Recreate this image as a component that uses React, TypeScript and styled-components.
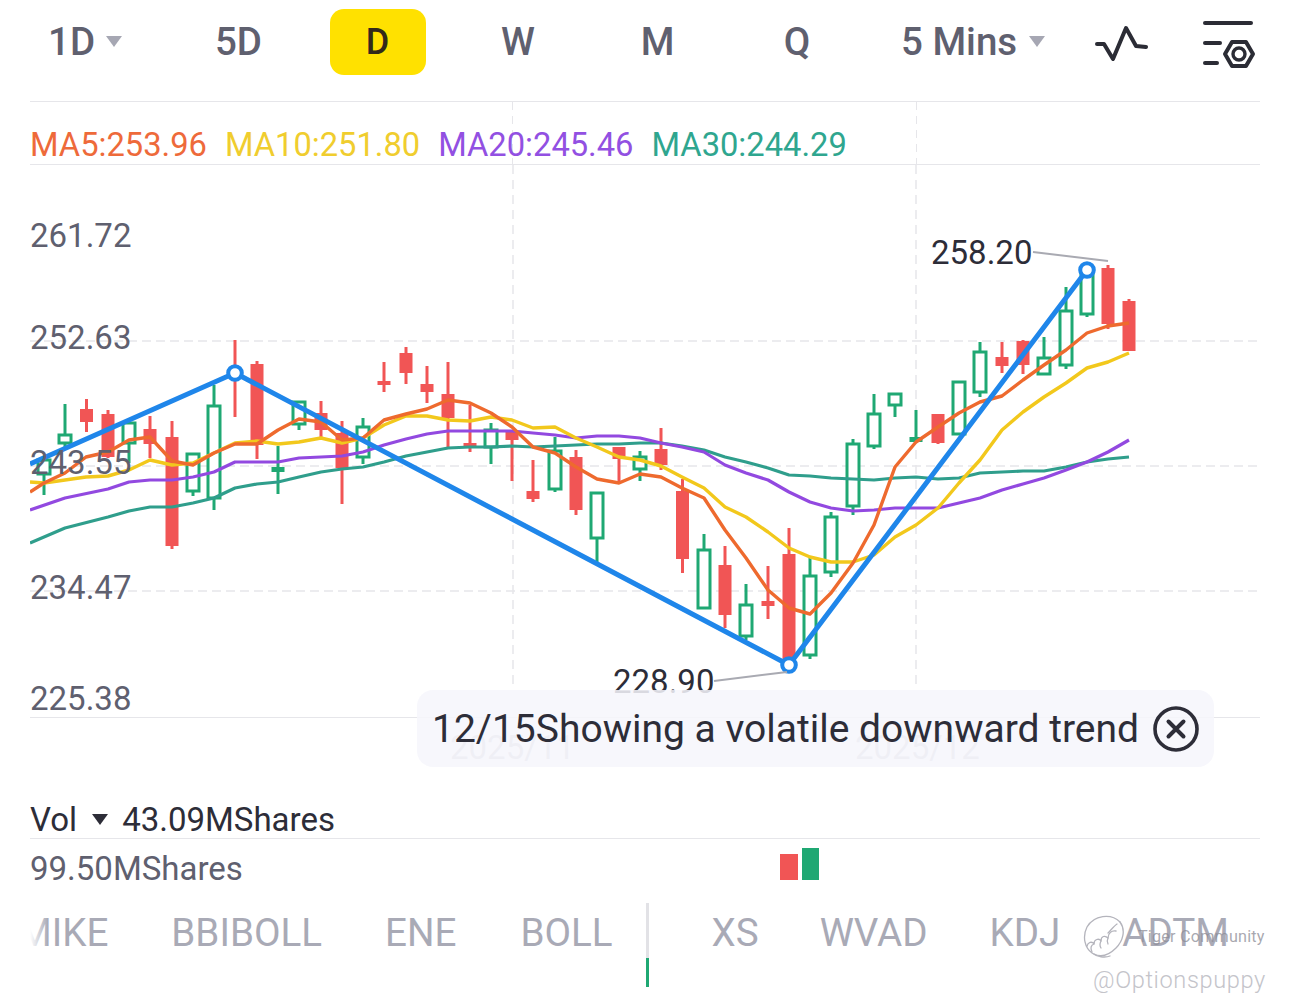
import React from "react";
import styled, { createGlobalStyle } from "styled-components";

const Global = createGlobalStyle`
  html, body { margin: 0; padding: 0; background: #fff; }
  body { font-family: Roboto, "Liberation Sans", sans-serif; }
  #root { width: 1290px; height: 1008px; overflow: hidden; }
`;

const Page = styled.div`
  position: relative;
  width: 1290px;
  height: 1008px;
  overflow: hidden;
  background: #fff;
`;

const Toolbar = styled.div`
  display: flex;
  align-items: center;
  height: 84px;
  padding: 0 0 0 30px;
`;

const Tab = styled.div<{ $w: number; $pad?: number }>`
  display: flex;
  align-items: center;
  flex: none;
  justify-content: ${(p) => (p.$pad !== undefined ? "flex-start" : "center")};
  width: ${(p) => p.$w}px;
  padding-left: ${(p) => p.$pad ?? 0}px;
  padding-bottom: 2px;
  box-sizing: border-box;
  font-size: 38.5px;
  font-weight: 500;
  white-space: nowrap;
  color: #5f606f;
`;

const Pill = styled.div`
  width: 96px;
  height: 66px;
  margin: 0 21.5px;
  border-radius: 14px;
  background: #ffe100;
  display: flex;
  align-items: center;
  justify-content: center;
  font-size: 36px;
  font-weight: 500;
  color: #33291a;
`;

const Caret = styled.span<{ $color?: string; $w?: number; $h?: number; $ml?: number }>`
  display: inline-block;
  margin-left: ${(p) => p.$ml ?? 11}px;
  width: 0;
  height: 0;
  border-left: ${(p) => (p.$w ?? 16) / 2}px solid transparent;
  border-right: ${(p) => (p.$w ?? 16) / 2}px solid transparent;
  border-top: ${(p) => p.$h ?? 11}px solid ${(p) => p.$color ?? "#a6a7b3"};
`;

const IconWrap = styled.svg`
  display: block;
  flex: none;
`;

const Rule = styled.div`
  height: 17px;
  margin: 0 30px;
  border-bottom: 1px solid #e6e6ea;
`;

const Chart = styled.div`
  position: relative;
  margin: 0 30px;
`;

const MaRow = styled.div`
  display: flex;
  align-items: center;
  gap: 18px;
  height: 62px;
  border-bottom: 1px solid #e6e6ea;
  font-size: 32.7px;
  line-height: 1;
  background-image: repeating-linear-gradient(to bottom, #e6e6ea 0 8px, transparent 8px 14px),
    repeating-linear-gradient(to bottom, #e6e6ea 0 8px, transparent 8px 14px);
  background-size: 1px 100%, 1px 100%;
  background-position: 482px 0, 886px 0;
  background-repeat: no-repeat;
`;

const Ma = styled.span<{ $c: string }>`
  color: ${(p) => p.$c};
  position: relative;
  top: 12px;
`;

const Plot = styled.div`
  position: relative;
  height: 552px;
  border-bottom: 1px solid #e6e6ea;
`;

const PlotSvg = styled.svg`
  display: block;
`;

const Price = styled.span<{ $y: number }>`
  position: absolute;
  left: 0;
  top: ${(p) => p.$y}px;
  font-size: 33px;
  line-height: 38px;
  color: #5f606f;
`;

const Peak = styled.span<{ $x: number; $y: number }>`
  position: absolute;
  left: ${(p) => p.$x}px;
  top: ${(p) => p.$y}px;
  font-size: 33px;
  line-height: 38px;
  color: #2d2d38;
`;

const Dates = styled.div`
  position: relative;
  height: 72px;
`;

const DateLabel = styled.span<{ $x: number }>`
  position: absolute;
  left: ${(p) => p.$x}px;
  top: 11px;
  font-size: 33px;
  line-height: 38px;
  color: #c6c6cf;
`;

const Banner = styled.div`
  position: absolute;
  left: 387px;
  top: 588px;
  width: 797px;
  height: 77px;
  box-sizing: border-box;
  padding: 0 15px 0 15px;
  border-radius: 16px;
  background: rgba(246, 246, 251, 0.86);
  display: flex;
  align-items: center;
  justify-content: space-between;
  font-size: 39px;
  white-space: nowrap;
  color: #2d2d38;
`;

const VolRow = styled.div`
  display: flex;
  align-items: center;
  height: 49px;
  padding-top: 11px;
  box-sizing: border-box;
  border-bottom: 1px solid #e6e6ea;
  font-size: 33px;
  color: #2d2d38;
`;

const VolValue = styled.span`
  margin-left: 14px;
`;

const SubRow = styled.div`
  display: flex;
  align-items: center;
  height: 59px;
  font-size: 33px;
  color: #5f606f;
`;

const SubValue = styled.span`
  width: 750px;
  flex: none;
`;

const Bar = styled.div<{ $c: string; $h: number; $w: number; $gap?: number }>`
  width: ${(p) => p.$w}px;
  height: ${(p) => p.$h}px;
  background: ${(p) => p.$c};
  margin-left: ${(p) => p.$gap ?? 0}px;
`;

const Bars = styled.div`
  display: flex;
  align-items: flex-end;
  height: 32px;
  margin-bottom: 10px;
`;

const Indicators = styled.div`
  position: relative;
  display: flex;
  align-items: flex-start;
  margin: 5px 0 0 30px;
  height: 104px;
  overflow: hidden;
  font-size: 38.6px;
  color: #a9aab6;
  &::before {
    content: "";
    position: absolute;
    left: 0;
    top: 0;
    width: 18px;
    height: 60px;
    background: linear-gradient(to right, #fff, rgba(255, 255, 255, 0));
    z-index: 1;
  }
`;

const Indicator = styled.span<{ $ml: number }>`
  flex: none;
  margin-left: ${(p) => p.$ml}px;
  margin-top: 7px;
  line-height: 46px;
`;

const Divider = styled.div`
  flex: none;
  width: 3px;
  height: 84px;
  margin-left: 33px;
  background: linear-gradient(to bottom, #e2e2e6 0 55px, #1fa873 55px 84px);
`;

const Mark = styled.div`
  position: absolute;
  left: 1083px;
  top: 914px;
  display: flex;
  align-items: flex-start;
`;

const MarkName = styled.span`
  position: absolute;
  left: 55px;
  top: 13px;
  white-space: nowrap;
  font-size: 16.2px;
  line-height: 20px;
  letter-spacing: 0.2px;
  color: rgba(140, 140, 150, 0.75);
`;

const MarkUser = styled.span`
  position: absolute;
  left: 10px;
  top: 51px;
  white-space: nowrap;
  font-size: 23.6px;
  font-weight: 300;
  line-height: 30px;
  letter-spacing: 0.6px;
  color: #c4c4ca;
`;

type C = [number, number, number, number, number, "r" | "g" | "gs"];
const RED = "#f15555";
const GREEN = "#1fa873";
const candles: C[] = [
  [44, 460, 474, 460, 495, "g"],
  [65, 435, 443, 404, 447, "g"],
  [86.5, 409, 422, 399, 432, "r"],
  [108, 414, 457, 410, 458, "r"],
  [129, 423, 443, 423, 463, "g"],
  [150, 429, 444, 416, 458, "r"],
  [172, 437, 546, 421, 549, "r"],
  [193, 454, 491, 453, 496, "g"],
  [214, 406, 498, 385, 510, "g"],
  [235, 372, 374, 340, 417, "r"],
  [257, 364, 445, 361, 459, "r"],
  [278, 467, 472, 446, 494, "gs"],
  [299, 402, 424, 402, 430, "g"],
  [321, 413, 430, 401, 437, "r"],
  [342, 433, 468, 421, 504, "r"],
  [363, 427, 457, 418, 464, "g"],
  [384, 381, 385, 362, 392, "r"],
  [406, 353, 373, 347, 384, "r"],
  [427, 384, 392, 366, 403, "r"],
  [448, 394, 418, 362, 449, "r"],
  [470, 443, 448, 405, 452, "r"],
  [491, 430, 447, 423, 464, "g"],
  [512, 432, 440, 432, 481, "r"],
  [533, 491, 499, 460, 502, "r"],
  [555, 451, 489, 437, 492, "g"],
  [576, 457, 510, 450, 515, "r"],
  [597, 493, 538, 493, 564, "g"],
  [619, 447, 459, 447, 484, "r"],
  [640, 457, 469, 451, 481, "g"],
  [661, 449, 465, 428, 470, "r"],
  [682.5, 491, 559, 479, 573, "r"],
  [704, 550, 608, 534, 608, "g"],
  [725, 565, 615, 546, 628, "r"],
  [746, 605, 636, 584, 640, "g"],
  [768, 601, 606, 566, 619, "r"],
  [789, 554, 660, 528, 660, "r"],
  [810, 576, 655, 558, 659, "g"],
  [831, 517, 572, 512, 577, "g"],
  [853, 444, 506, 439, 515, "g"],
  [874, 414, 446, 394, 449, "g"],
  [895, 394, 405, 394, 417, "g"],
  [916, 437, 442, 410, 442, "gs"],
  [938, 414, 443, 414, 444, "r"],
  [959, 382, 434, 381, 434, "g"],
  [980, 352, 392, 342, 397, "g"],
  [1002, 357, 366, 342, 373, "r"],
  [1023, 341, 365, 340, 374, "r"],
  [1044, 358, 374, 337, 374, "g"],
  [1066, 311, 365, 287, 369, "g"],
  [1087, 270, 314, 265, 317, "g"],
  [1108, 268, 324, 265, 329, "r"],
  [1129, 301, 351, 299, 351, "r"],
];

const toPts = (a: number[][]) => a.map((p) => p.join(",")).join(" ");

const ma30 = [[30,543],[65,528],[108,517],[129,511],[150,507],[172,507],[193,503],[214,498],[235,488],[257,484],[278,482],[299,477],[321,472],[342,469],[363,467],[384,462],[406,456],[427,452],[448,448],[470,447],[491,447],[512,446],[533,447],[555,446],[576,445],[597,444],[619,444],[640,443],[661,443],[682,446],[704,450],[725,457],[746,462],[768,468],[789,475],[810,476],[831,478],[853,479],[874,480],[895,478],[916,477],[938,479],[959,478],[980,473],[1002,472],[1023,471],[1044,471],[1066,467],[1087,462],[1108,459],[1129,457]];
const ma20 = [[30,510],[65,498],[108,489],[129,482],[150,480],[172,480],[193,477],[214,472],[235,462],[257,462],[278,462],[299,458],[321,457],[342,456],[363,452],[384,445],[406,439],[427,434],[448,431],[470,431],[491,431],[512,431],[533,433],[555,435],[576,438],[597,436],[619,436],[640,438],[661,443],[682,447],[704,452],[725,465],[746,473],[768,480],[789,492],[810,502],[831,508],[853,511],[874,510],[895,508],[916,508],[938,508],[959,503],[980,498],[1002,490],[1023,484],[1044,478],[1066,470],[1087,462],[1108,452],[1129,440]];
const ma10 = [[30,482],[44,483],[65,480],[86,477],[108,476],[129,470],[150,460],[172,465],[193,463],[214,453],[235,443],[257,441],[278,444],[299,442],[321,438],[342,443],[363,438],[384,425],[406,416],[427,416],[448,420],[470,421],[491,417],[512,420],[533,428],[555,427],[576,438],[597,447],[619,457],[640,460],[661,466],[682,477],[704,488],[725,507],[746,517],[768,532],[789,548],[810,557],[831,562],[853,562],[874,555],[895,537],[916,525],[938,508],[959,483],[980,460],[1002,430],[1023,412],[1044,397],[1066,383],[1087,368],[1108,362],[1129,353]];
const ma5 = [[30,492],[44,483],[65,473],[86,457],[108,452],[129,440],[150,437],[172,461],[193,465],[214,453],[235,444],[257,444],[278,430],[299,419],[321,422],[342,440],[363,438],[384,420],[406,414],[427,409],[448,400],[470,403],[491,413],[512,427],[533,447],[555,453],[576,467],[597,479],[619,483],[640,474],[661,477],[682,488],[704,498],[725,530],[746,558],[768,590],[789,608],[810,614],[831,593],[853,563],[874,525],[895,467],[916,442],[938,427],[959,413],[980,402],[1002,396],[1023,380],[1044,365],[1066,350],[1087,333],[1108,326],[1129,323]];
const trend = [[30,464],[235,373],[789,665],[1087,270]];

const Candle: React.FC<{ c: C }> = ({ c }) => {
  const [x, top, bot, hi, lo, k] = c;
  const col = k === "r" ? RED : GREEN;
  return (
    <g>
      <line x1={x} x2={x} y1={hi} y2={lo} stroke={col} strokeWidth={3} />
      {k === "g" ? (
        <rect x={x - 6} y={top} width={12} height={bot - top} fill="#fff" stroke={col} strokeWidth={3} />
      ) : (
        <rect x={x - 6.5} y={top} width={13} height={bot - top} fill={col} />
      )}
    </g>
  );
};

const gridY = [341, 466, 591];
const gridX = [513, 916];

const PlotDrawing = () => (
  <PlotSvg width={1230} height={552} viewBox="30 165 1230 552">
    {gridY.map((y) => (
      <line key={y} x1={30} x2={1260} y1={y} y2={y} stroke="#e6e6ea" strokeWidth={1.5} strokeDasharray="9 5" />
    ))}
    {gridX.map((x) => (
      <line key={x} x1={x} x2={x} y1={165} y2={690} stroke="#e6e6ea" strokeWidth={1.5} strokeDasharray="9 6" />
    ))}
    {candles.map((c) => (
      <Candle key={c[0]} c={c} />
    ))}
    <polyline points={toPts(ma30)} fill="none" stroke="#2f9e8c" strokeWidth={3.2} strokeLinejoin="round" />
    <polyline points={toPts(ma20)} fill="none" stroke="#9249e0" strokeWidth={3.2} strokeLinejoin="round" />
    <polyline points={toPts(ma10)} fill="none" stroke="#f2c81c" strokeWidth={3.4} strokeLinejoin="round" />
    <polyline points={toPts(ma5)} fill="none" stroke="#ee6a2e" strokeWidth={3.4} strokeLinejoin="round" />
    <polyline points={toPts(trend)} fill="none" stroke="#1f86ea" strokeWidth={5} strokeLinejoin="round" />
    {trend.slice(1).map(([x, y]) => (
      <circle key={x} cx={x} cy={y} r={6.8} fill="#fff" stroke="#1f86ea" strokeWidth={4} />
    ))}
    <line x1={1033} y1={252} x2={1108} y2={261} stroke="#a9aab2" strokeWidth={2} />
    <line x1={714} y1={681} x2={787} y2={672} stroke="#a9aab2" strokeWidth={2} />
  </PlotSvg>
);

const PulseIcon = () => (
  <IconWrap width={56} height={40} viewBox="0 0 56 40">
    <polyline
      points="3,23 10,23 19,38 32,7 42,25 52,26"
      fill="none"
      stroke="#2b2c35"
      strokeWidth={4}
      strokeLinecap="round"
      strokeLinejoin="round"
    />
  </IconWrap>
);

const SettingsIcon = () => (
  <IconWrap width={54} height={52} viewBox="0 0 54 52">
    <g fill="none" stroke="#2b2c35" strokeWidth={4} strokeLinecap="round" strokeLinejoin="round">
      <line x1={3} x2={49} y1={3} y2={3} />
      <line x1={3} x2={18} y1={23} y2={23} />
      <line x1={3} x2={15} y1={43} y2={43} />
      <polygon points="23,34 30,22 44,22 51,34 44,46 30,46" />
      <circle cx={37} cy={34} r={6} strokeWidth={3.4} />
    </g>
  </IconWrap>
);

const CloseIcon = () => (
  <IconWrap width={46} height={46} viewBox="0 0 46 46">
    <circle cx={23} cy={23} r={21} fill="none" stroke="#2d2d38" strokeWidth={3.6} />
    <path d="M15.5 15.5 L30.5 30.5 M30.5 15.5 L15.5 30.5" stroke="#2d2d38" strokeWidth={4} strokeLinecap="round" />
  </IconWrap>
);

const TigerLogo = () => (
  <IconWrap width={46} height={46} viewBox="0 0 46 46">
    <g fill="none" stroke="#b4b4bc" strokeWidth={1.3} strokeLinecap="round" strokeLinejoin="round">
      <path d="M37 8 C28 -1 11 1 4 13 C-1 23 2 34 9 39 C14 43 22 44 27 42" />
      <path d="M37 8 C43 16 40 27 33 34 C27 40 19 44 11 40" />
      <path d="M4 32 C5 28 9 27 11 30 C11 25 16 24 18 27 C18 22 22 21 25 24 C25 19 29 16 33 17" />
      <path d="M9 38 C7 34 8 31 11 30 M18 34 C16 31 17 29 18 27 M25 30 C24 28 24 26 25 24" />
      <path d="M25 19 C28 16 31 12 34 10" />
    </g>
  </IconWrap>
);

const ToolbarCluster = styled.div`
  display: flex;
  align-items: center;
  margin-left: 49px;
`;

const SettingsSlot = styled.div`
  margin-left: 52px;
  margin-top: 8px;
`;

const PulseSlot = styled.div`
  margin-bottom: 2px;
`;

export default function App() {
  return (
    <Page>
      <Global />
      <Toolbar>
        <Tab $w={139} $pad={18}>
          1D
          <Caret />
        </Tab>
        <Tab $w={139}>5D</Tab>
        <Pill>D</Pill>
        <Tab $w={142}>W</Tab>
        <Tab $w={137}>M</Tab>
        <Tab $w={142}>Q</Tab>
        <Tab $w={177} $pad={33}>
          5 Mins
          <Caret $ml={12} />
        </Tab>
        <ToolbarCluster>
          <PulseSlot>
            <PulseIcon />
          </PulseSlot>
          <SettingsSlot>
            <SettingsIcon />
          </SettingsSlot>
        </ToolbarCluster>
      </Toolbar>
      <Rule />
      <Chart>
        <MaRow>
          <Ma $c="#ee6a3a">MA5:253.96</Ma>
          <Ma $c="#f0cd2e">MA10:251.80</Ma>
          <Ma $c="#9250e2">MA20:245.46</Ma>
          <Ma $c="#2fa68f">MA30:244.29</Ma>
        </MaRow>
        <Plot>
          <PlotDrawing />
          <Price $y={52}>261.72</Price>
          <Price $y={154}>252.63</Price>
          <Price $y={279}>243.55</Price>
          <Price $y={404}>234.47</Price>
          <Price $y={515}>225.38</Price>
          <Peak $x={901} $y={69}>258.20</Peak>
          <Peak $x={583} $y={498}>228.90</Peak>
        </Plot>
        <Dates>
          <DateLabel $x={420}>2025/11</DateLabel>
          <DateLabel $x={825}>2025/12</DateLabel>
        </Dates>
        <Banner>
          12/15Showing a volatile downward trend
          <CloseIcon />
        </Banner>
        <VolRow>
          Vol
          <Caret $color="#2d2d38" $w={16} $h={11} $ml={15} />
          <VolValue>43.09MShares</VolValue>
        </VolRow>
        <SubRow>
          <SubValue>99.50MShares</SubValue>
          <Bars>
            <Bar $c={RED} $w={18} $h={26} />
            <Bar $c={GREEN} $w={17} $h={32} $gap={4} />
          </Bars>
        </SubRow>
      </Chart>
      <Indicators>
        <Indicator $ml={-12}>MIKE</Indicator>
        <Indicator $ml={63}>BBIBOLL</Indicator>
        <Indicator $ml={63}>ENE</Indicator>
        <Indicator $ml={64}>BOLL</Indicator>
        <Divider />
        <Indicator $ml={63}>XS</Indicator>
        <Indicator $ml={61}>WVAD</Indicator>
        <Indicator $ml={62}>KDJ</Indicator>
        <Indicator $ml={62}>ADTM</Indicator>
      </Indicators>
      <Mark>
        <TigerLogo />
        <MarkName>Tiger Community</MarkName>
        <MarkUser>@Optionspuppy</MarkUser>
      </Mark>
    </Page>
  );
}
